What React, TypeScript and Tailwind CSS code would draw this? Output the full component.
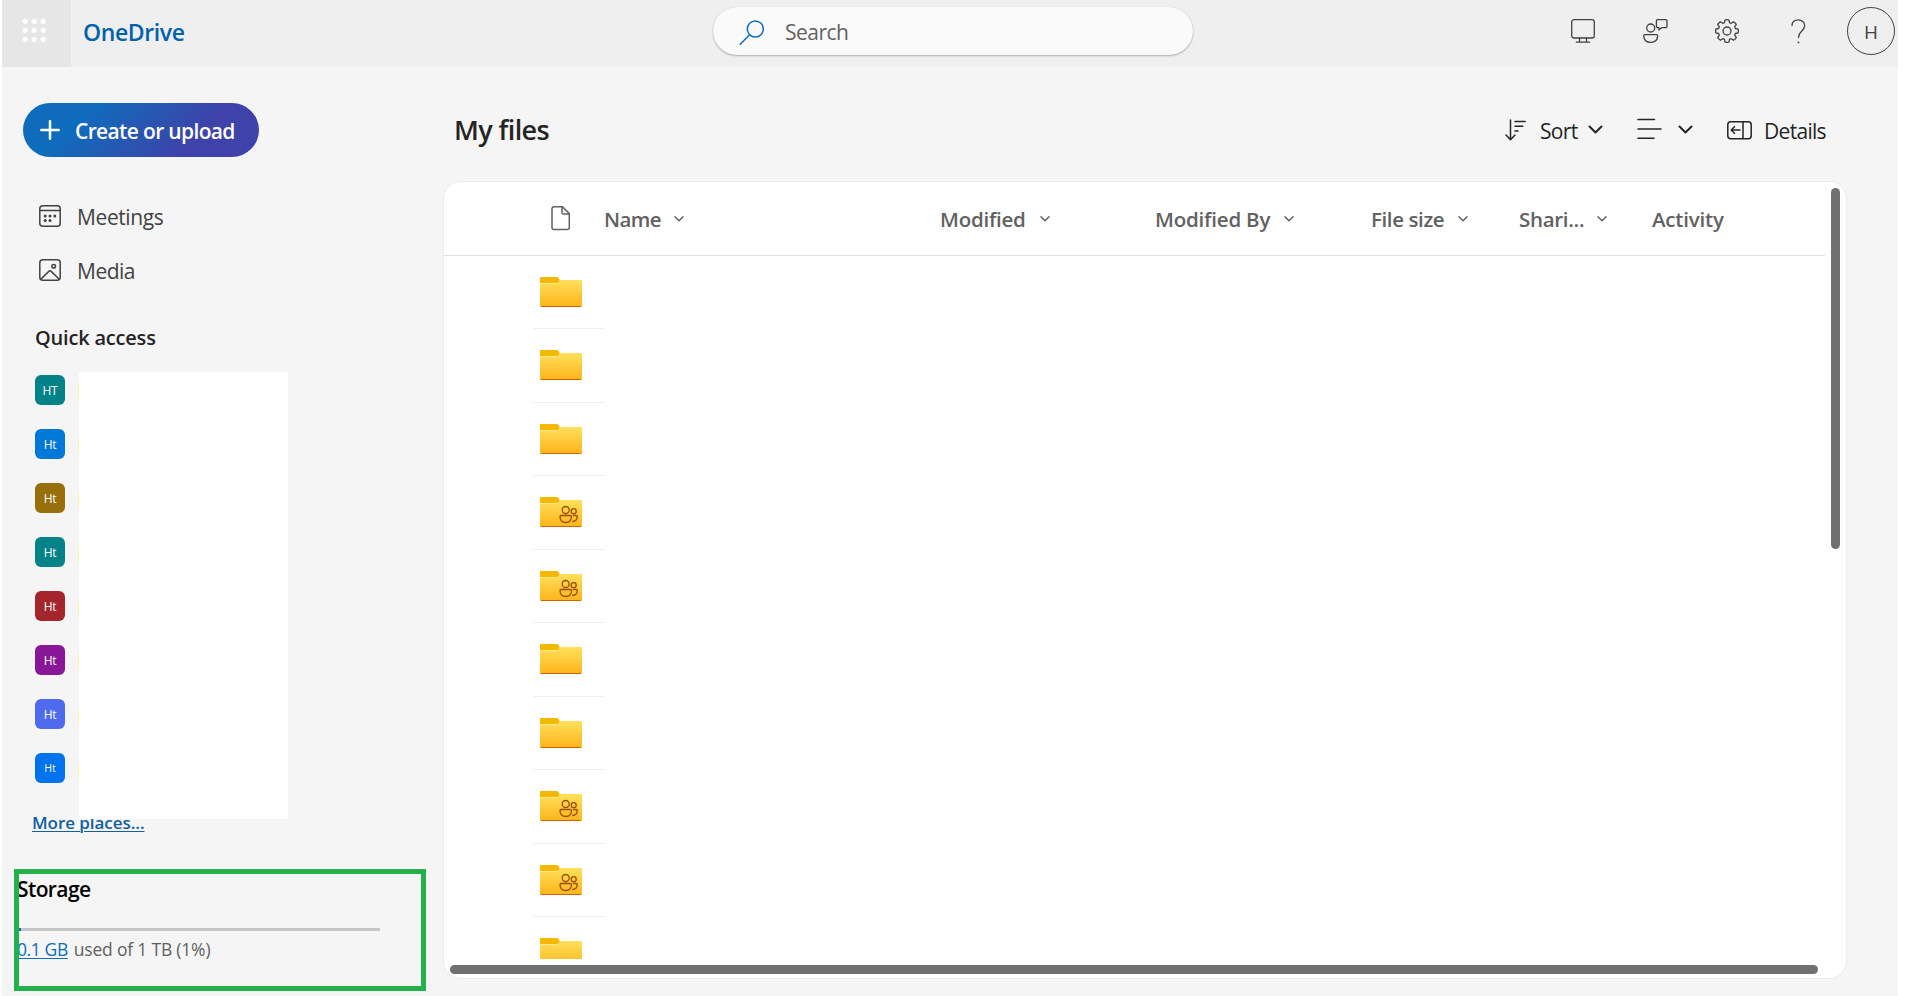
import type { ReactNode } from "react";

const places = [
  { initials: "HT", color: "bg-[#038387]" },
  { initials: "Ht", color: "bg-[#0078d7]" },
  { initials: "Ht", color: "bg-[#986f0b]" },
  { initials: "Ht", color: "bg-[#038387]" },
  { initials: "Ht", color: "bg-[#a4262c]" },
  { initials: "Ht", color: "bg-[#881798]" },
  { initials: "Ht", color: "bg-[#4f6bed]" },
  { initials: "Ht", color: "bg-[#0073ed]", small: true },
];

const rows = [false, false, false, true, true, false, false, true, true, false];

const columns = [
  { label: "Name", width: "w-[336px]", text: "w-[70px] tracking-[-0.6px]", sortable: true },
  { label: "Modified", width: "w-[215px]", text: "w-[100px] tracking-[-0.25px]", sortable: true },
  { label: "Modified By", width: "w-[216px]", text: "w-[129px] tracking-[-0.2px]", sortable: true },
  { label: "File size", width: "w-[148px]", text: "w-[87px] tracking-[-0.4px]", sortable: true },
  { label: "Shari...", width: "w-[133px]", text: "w-[78px] tracking-[-0.3px]", sortable: true },
  { label: "Activity", width: "w-[80px]", text: "w-[80px] tracking-[-0.2px]", sortable: false },
];

const Stroke = ({ w, h, sw = 1.3, className = "", children }: { w: number; h: number; sw?: number; className?: string; children: ReactNode }) => (
  <svg
    width={w}
    height={h}
    viewBox={`0 0 ${w} ${h}`}
    fill="none"
    stroke="currentColor"
    strokeWidth={sw}
    strokeLinecap="round"
    strokeLinejoin="round"
    className={`shrink-0 ${className}`}
  >
    {children}
  </svg>
);

const SmallChevron = () => (
  <Stroke w={10} h={6} sw={1.5} className="mt-px">
    <path d="M1 .8l4 4 4-4" />
  </Stroke>
);

const BigChevron = ({ className = "" }: { className?: string }) => (
  <Stroke w={15} h={9} sw={2} className={className}>
    <path d="M1.5 1.5l6 6 6-6" />
  </Stroke>
);

const Folder = ({ shared }: { shared: boolean }) => (
  <svg width="42" height="30" viewBox="0 0 42 30" className="shrink-0">
    <defs>
      <linearGradient id="folderFill" x1="0" y1="0" x2="0" y2="1">
        <stop offset="0" stopColor="#ffe05c" />
        <stop offset="1" stopColor="#ffb41a" />
      </linearGradient>
    </defs>
    <path d="M0 6h17l3-3h21a1 1 0 011 1v25a1 1 0 01-1 1H1a1 1 0 01-1-1z" fill="url(#folderFill)" />
    <path d="M0 6.5h16.5l3-3" fill="none" stroke="#ffe98a" strokeWidth="1" />
    <path d="M0 1a1 1 0 011-1h15.5c1.500 0 3 1.500 3 3s-1.500 3-3 3H0z" fill="#f5b800" />
    <path d="M1 29h40v.2a.8.8 0 01-.8.8H1.800A.8.8 0 011 29.200z" fill="#ca6408" />
    {shared && (
      <g fill="none" stroke="#9c4a06" strokeWidth="1.300">
        <circle cx="25.700" cy="13" r="3.500" />
        <circle cx="33.700" cy="14.200" r="2.500" />
        <path d="M21 18.500h9.500a1 1 0 011 1c0 3.800-2.200 6-5.700 6s-5.800-2.200-5.800-6a1 1 0 011-1z" />
        <path d="M33 18.500h3.200a1 1 0 011 1c0 3-1.700 5-5 5" />
      </g>
    )}
  </svg>
);

const Header = () => (
  <header className="flex h-[67px] bg-[#efefef] text-[#424242]">
    <div className="w-[69px] bg-[#e6e6e6] pl-5 pt-[18px]">
      <svg width="24" height="24" viewBox="0 0 24 24" fill="#fff">
        {[3, 12, 21].map((y) => [3, 12, 21].map((x) => <circle key={`${x}-${y}`} cx={x + 0.2} cy={y + 0.3} r="2.600" />))}
      </svg>
    </div>
    <div className="w-[642px] pl-[12px] pt-[16px] text-[23px] leading-8 font-semibold tracking-[-0.4px] text-[#0062ad]">OneDrive</div>
    <div className="mt-[7px] flex h-12 w-[480px] rounded-full bg-[#fafafa] pl-[26px] shadow-[0_1px_2px_rgba(0,0,0,0.28),0_0_1px_rgba(0,0,0,0.15)]">
      <Stroke w={26} h={26} sw={1.5} className="mt-[13px] text-[#0f6cbd]">
        <circle cx="16.300" cy="9" r="8" />
        <path d="M10.700 14.700L1.200 24.200" />
      </Stroke>
      <span className="ml-[20px] mt-[9px] text-[21px] leading-8 tracking-[-0.5px] text-[#616161]">Search</span>
    </div>

    <Stroke w={24} h={24} className="ml-[378px] mt-[19px]">
      <rect x=".7" y=".7" width="22.600" height="18.300" rx="2.300" />
      <path d="M8.500 19v4M15.500 19v4M5.300 23.200h13.400" />
    </Stroke>
    <Stroke w={25} h={25} className="ml-[48px] mt-[19px]">
      <path d="M14.700.7h8a1.300 1.300 0 011.300 1.300v5.300a1.300 1.300 0 01-1.300 1.300h-3.800l-3 2.300V8.600h-1.200a1.300 1.300 0 01-1.300-1.300V2A1.300 1.300 0 0114.700.7z" />
      <circle cx="7.700" cy="9" r="4" />
      <path d="M1.700 15.600h12a1 1 0 011 1c0 4.500-2.800 6.800-7 6.800s-7-2.300-7-6.800a1 1 0 011-1z" />
    </Stroke>
    <Stroke w={24} h={24} className="ml-[47px] mt-[19px]">
      <circle cx="12" cy="12" r="4" />
      <path d="M10.100.8Q12 .5 13.900.8L14.500 3.600 16.200 4.300 18.600 2.700Q20.200 3.800 21.300 5.400L19.700 7.800 20.400 9.500 23.200 10.100Q23.500 12 23.200 13.900L20.400 14.500 19.700 16.200 21.300 18.600Q20.200 20.200 18.600 21.300L16.200 19.700 14.500 20.400 13.900 23.200Q12 23.500 10.100 23.200L9.500 20.400 7.800 19.700 5.400 21.300Q3.800 20.200 2.700 18.600L4.300 16.200 3.600 14.500.8 13.900Q.5 12 .8 10.100L3.600 9.500 4.300 7.800 2.700 5.400Q3.800 3.800 5.400 2.700L7.800 4.300 9.500 3.600z" />
    </Stroke>
    <Stroke w={16} h={25} className="ml-[52px] mt-[19px]">
      <path d="M1 6.500C1 3 3.800.8 7.300.8s6.400 2.500 6.400 6c0 5-6.200 5.500-6.200 11.400v.4" />
      <path d="M7.500 23.300v.1" strokeWidth="1.800" />
    </Stroke>
    <div className="ml-[40px] mt-[7px] flex size-12 shrink-0 items-center justify-center rounded-full border border-[#424242] pt-[2px] text-[19px] leading-6">H</div>
  </header>
);

const Sidebar = () => (
  <aside className="flex h-[929px] w-[441px] shrink-0 flex-col pt-9">
    <button className="ml-[21px] flex h-[54px] w-[236px] rounded-full bg-[linear-gradient(135deg,#0f6cbd_25%,#3f42a8_72%)] pl-[17px] text-white">
      <Stroke w={20} h={20} sw={2.5} className="mt-[17px]">
        <path d="M10 1.300v17.400M1.300 10h17.400" />
      </Stroke>
      <span className="ml-[15px] mt-[12px] text-[21px] leading-8 font-semibold tracking-[-0.65px] whitespace-nowrap">Create or upload</span>
    </button>

    <nav className="mt-[32px] ml-[37px] text-[#424242]">
      <a className="flex h-[54px] items-center">
        <Stroke w={22} h={22} sw={1.5}>
          <rect x=".8" y=".8" width="20.400" height="20.400" rx="3" />
          <path d="M.8 5.600h20.400" />
          <g fill="currentColor" stroke="none">
            <circle cx="6.200" cy="11" r="1.500" />
            <circle cx="11" cy="11" r="1.500" />
            <circle cx="15.800" cy="11" r="1.500" />
            <circle cx="6.200" cy="15.500" r="1.500" />
            <circle cx="11" cy="15.500" r="1.500" />
          </g>
        </Stroke>
        <span className="ml-[16px] mt-[2px] text-[21px] leading-8 tracking-[-0.4px]">Meetings</span>
      </a>
      <a className="flex h-[54px] items-center">
        <Stroke w={22} h={22} sw={1.5}>
          <rect x=".8" y=".8" width="20.400" height="20.400" rx="3" />
          <circle cx="14.700" cy="7.200" r="1.800" />
          <path d="M2 20l7.800-7.600a1.700 1.700 0 012.400 0L20 20" />
        </Stroke>
        <span className="ml-[16px] mt-[2px] text-[21px] leading-8 tracking-[-0.5px]">Media</span>
      </a>
    </nav>

    <h2 className="mt-[25px] ml-[33px] h-[72px] text-[20px] leading-8 font-semibold tracking-[-0.2px] text-[#242424]">Quick access</h2>
    {/* names are blanked out */}
    <div className="relative z-10 -mt-[22px] ml-[33px] flex">
      <ul className="flex flex-col gap-6 pt-[3px]">
        {places.map((place, i) => (
          <li key={i} className="flex w-11 items-center justify-between">
            <span className={`flex size-[30px] items-center justify-center rounded-[6px] pt-[2px] text-white ${place.small ? "text-[10.5px]" : "text-[12px] tracking-[-0.2px]"} ${place.color}`}>
              {place.initials}
            </span>
            <span className="mt-[3px] h-[15px] w-px bg-[#f8f8a8]" />
          </li>
        ))}
      </ul>
      <div className="h-[447px] w-[209px] bg-white" />
    </div>
    <a className="-mt-[12px] ml-[30px] text-[17px] leading-8 font-semibold tracking-[-0.05px] text-[#115ea3] underline decoration-1 underline-offset-2">More places...</a>

    <section className="mt-auto mb-[5px] ml-3 h-[122px] w-[412px] overflow-hidden border-5 border-[#24b14c]">
      <h2 className="-mt-px -ml-[2px] h-[55px] text-[21px] leading-8 font-semibold tracking-[-0.6px] text-black">Storage</h2>
      <div className="h-[3px] w-[361px] bg-[#c6c6c6]">
        <div className="h-full w-[2px] bg-[#0f6cbd]" />
      </div>
      <p className="-ml-[2px] mt-[2px] text-[17.5px] leading-8 tracking-[-0.2px] text-[#616161]">
        <a className="tracking-[-0.4px] text-[#0f6cbd] underline decoration-1 underline-offset-2">0.1 GB</a>
        <span className="ml-[6px]">used of 1 TB (1%)</span>
      </p>
    </section>
  </aside>
);

const Toolbar = () => (
  <div className="flex h-[114px] text-[#242424]">
    <h1 className="mt-[45px] ml-[11px] w-[1051px] text-[27px] leading-9 font-semibold tracking-[-0.6px]">My files</h1>
    <Stroke w={21} h={22} sw={1.5} className="mt-[52px]">
      <path d="M5.500 1v19.500M1 16l4.500 4.700L10 16M10 2.500h10.200M10 7.300h7.800M10 12h3" />
    </Stroke>
    <span className="mt-[48px] ml-[14px] w-[48px] text-[21px] leading-8 tracking-[-0.7px]">Sort</span>
    <BigChevron className="mt-[58px]" />
    <Stroke w={25} h={22} sw={1.5} className="mt-[51px] ml-[34px]">
      <path d="M1 1.500h16.500M1 11h23M1 20.200h16" />
    </Stroke>
    <BigChevron className="mt-[58px] ml-[16px]" />
    <Stroke w={25} h={19} sw={1.5} className="mt-[54px] ml-[34px]">
      <rect x=".8" y=".8" width="23.400" height="17" rx="3" />
      <path d="M16 1v16.500M13 9H4.500M7.500 5.700L4.200 9l3.300 3.300" />
    </Stroke>
    <span className="mt-[48px] ml-[12px] text-[21px] leading-8 tracking-[-0.7px]">Details</span>
  </div>
);

const FileList = () => (
  <div className="relative h-[798px] w-[1404px] overflow-hidden rounded-[18px] border border-[#ebebeb] bg-white">
    <div className="flex h-[74px] w-[1381px] border-b border-[#e0e0e0] text-[#616161]">
      <Stroke w={20} h={25} sw={1.5} className="mt-[24px] mr-[33px] ml-[107px]">
        <path d="M3 .8h8.500L18.300 7.600V21.500a2 2 0 01-2 2H3a2 2 0 01-2-2V2.800a2 2 0 012-2zM11 .8v5.700a1.500 1.500 0 001.500 1.500h5.800" />
      </Stroke>
      {columns.map((col) => (
        <div key={col.label} className={`flex items-center ${col.width}`}>
          <span className={`text-[20.5px] leading-8 font-semibold whitespace-nowrap ${col.text}`}>{col.label}</span>
          {col.sortable && <SmallChevron />}
        </div>
      ))}
    </div>
    <div className="h-[703px] overflow-hidden">
      {rows.map((shared, i) => (
        <div key={i} className="ml-[90px] flex h-[73.47px] w-[70px] border-b border-[#ededed] pt-[21px] pl-[6px]">
          <Folder shared={shared} />
        </div>
      ))}
    </div>
    {/* scrollbars */}
    <div className="absolute top-[6px] right-[6px] h-[361px] w-[9px] rounded-full bg-[#707070]" />
    <div className="absolute bottom-[4px] left-[6px] h-[9px] w-[1368px] rounded-full bg-[#707070]" />
  </div>
);

export default function App() {
  return (
    <div className="h-[996px] w-[1906px] overflow-hidden bg-white pl-[2px] font-['Open_Sans','Noto_Sans',sans-serif]">
      <div className="h-full w-[1896px] bg-[#f5f5f5]">
        <Header />
        <div className="flex">
          <Sidebar />
          <main>
            <Toolbar />
            <FileList />
          </main>
        </div>
      </div>
    </div>
  );
}
